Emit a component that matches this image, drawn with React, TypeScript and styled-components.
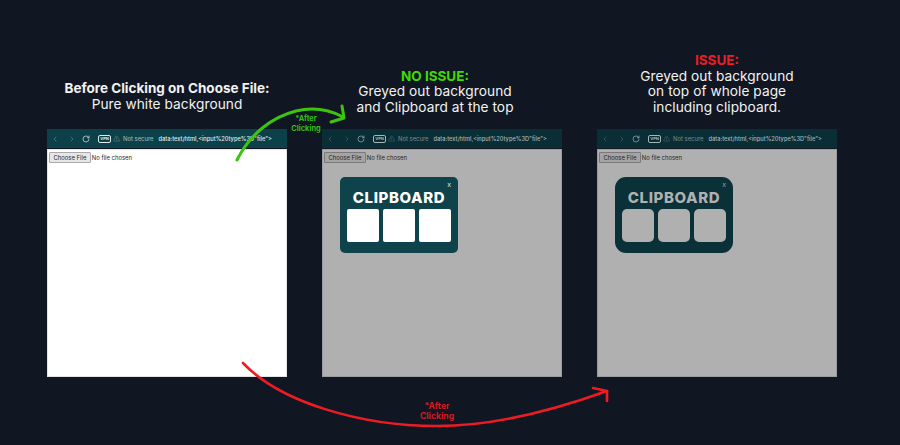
import { ChevronLeft, ChevronRight, RotateCw, TriangleAlert } from "lucide-react";
import styled, { createGlobalStyle } from "styled-components";

const GlobalStyle = createGlobalStyle`
    html, body {
        margin: 0;
        padding: 0;
        background: #111722;
    }
`;

const Page = styled.div`
    position: relative;
    display: flex;
    gap: 35px;
    width: 900px;
    height: 445px;
    padding: 53px 0 0 47px;
    box-sizing: border-box;
    overflow: hidden;
    background: #111722;
    font-family: Inter, "Liberation Sans", sans-serif;
`;

const Column = styled.section`
    display: flex;
    flex-direction: column;
    width: 240px;
`;

const Caption = styled.div<{ $lift?: number; $shift?: number }>`
    display: flex;
    flex-direction: column;
    justify-content: flex-end;
    height: 62px;
    box-sizing: border-box;
    padding-bottom: ${(p) => p.$lift || 0}px;
    padding-right: ${(p) => p.$shift || 0}px;
    margin-bottom: 14px;
    text-align: center;
    color: #f1f2f2;
    font-size: 13.7px;
    line-height: 15.5px;
    letter-spacing: 0.05px;
`;

const CaptionTitle = styled.strong<{ $color?: string }>`
    font-weight: 700;
    font-size: 13.5px;
    letter-spacing: 0;
    color: ${(p) => p.$color || "#f1f2f2"};
`;

const Browser = styled.div`
    display: flex;
    flex-direction: column;
    height: 248px;
`;

const Toolbar = styled.div<{ $dim?: boolean }>`
    display: flex;
    align-items: center;
    height: 19px;
    margin-bottom: 1px;
    padding-left: 4px;
    background: ${(p) => (p.$dim ? "#0a2e36" : "#0c4149")};
    color: ${(p) => (p.$dim ? "#a9b4b6" : "#e3e9ea")};
    font-size: 5.9px;
    white-space: nowrap;
`;

const NavIcon = styled.span<{ $gap: number; $faint?: boolean }>`
    display: flex;
    margin-right: ${(p) => p.$gap}px;
    opacity: ${(p) => (p.$faint ? 0.4 : 1)};
`;

const VpnBadge = styled.span`
    width: 13px;
    height: 8px;
    margin-right: 2px;
    border: 1px solid currentColor;
    border-radius: 2px;
    box-sizing: border-box;
    font-size: 4px;
    font-weight: 700;
    line-height: 6px;
    text-align: center;
`;

const Insecure = styled.span`
    margin: 0 5px 0 3px;
    opacity: 0.7;
`;

const Url = styled.span`
    font-size: 5.7px;
    font-weight: 500;
`;

const Viewport = styled.div<{ $dim?: boolean }>`
    position: relative;
    flex: 1;
    padding: 3px 2px;
    background: ${(p) => (p.$dim ? "#b0b0b0" : "#ffffff")};
    box-shadow: inset 0 0 0 1px ${(p) => (p.$dim ? "#9a9c9e" : "#e4e4e4")};
    color: #262626;
    font-size: 5.9px;
    line-height: 11px;
`;

const FileButton = styled.span<{ $dim?: boolean }>`
    display: inline-block;
    margin-right: 1px;
    padding: 0 3.5px;
    height: 9px;
    border: 1px solid ${(p) => (p.$dim ? "#7a7a7a" : "#a9a9a9")};
    border-radius: 1px;
    background: ${(p) => (p.$dim ? "#a4a4a4" : "#e6e6e6")};
    line-height: 9px;
`;

const Clipboard = styled.div<{ $dim?: boolean }>`
    position: absolute;
    top: 28px;
    left: 18px;
    display: flex;
    flex-direction: column;
    align-items: center;
    width: 118px;
    height: 76px;
    box-sizing: border-box;
    padding-top: 12px;
    border-radius: ${(p) => (p.$dim ? 11 : 5)}px;
    background: ${(p) => (p.$dim ? "#0a3038" : "#0f434c")};
    color: ${(p) => (p.$dim ? "#b0b0b0" : "#ffffff")};
`;

const ClipboardTitle = styled.div`
    font-size: 15px;
    font-weight: 800;
    line-height: 18px;
    letter-spacing: 0.6px;
`;

const CloseMark = styled.span`
    position: absolute;
    top: 3px;
    right: 7px;
    font-size: 7px;
    line-height: 9px;
    opacity: 0.85;
`;

const Slots = styled.div`
    display: flex;
    gap: 4px;
    margin-top: 2px;
`;

const Slot = styled.div<{ $dim?: boolean }>`
    width: 32px;
    height: 33px;
    border-radius: ${(p) => (p.$dim ? 5 : 2)}px;
    background: ${(p) => (p.$dim ? "#b0b0b0" : "#ffffff")};
`;

const Arrows = styled.svg`
    position: absolute;
    top: 0;
    left: 0;
    pointer-events: none;
`;

const Note = styled.div<{ $color: string; $x: number; $y: number; $size: number }>`
    position: absolute;
    left: ${(p) => p.$x}px;
    top: ${(p) => p.$y}px;
    width: 60px;
    margin-left: -30px;
    color: ${(p) => p.$color};
    font-size: ${(p) => p.$size}px;
    font-weight: 700;
    line-height: 9.5px;
    text-align: center;
`;

function BrowserFrame({ dim, children }: { dim?: boolean; children?: React.ReactNode }) {
    return (
        <Browser>
            <Toolbar $dim={dim}>
                <NavIcon $gap={9} $faint><ChevronLeft size={8} /></NavIcon>
                <NavIcon $gap={6} $faint><ChevronRight size={8} /></NavIcon>
                <NavIcon $gap={8}><RotateCw size={8} /></NavIcon>
                <VpnBadge>VPN</VpnBadge>
                <NavIcon $gap={0} $faint><TriangleAlert size={7} /></NavIcon>
                <Insecure>Not secure</Insecure>
                <Url>data:text/html,&lt;input%20type%3D"file"&gt;</Url>
            </Toolbar>
            <Viewport $dim={dim}>
                <FileButton $dim={dim}>Choose File</FileButton>
                No file chosen
                {children}
            </Viewport>
        </Browser>
    );
}

function ClipboardCard({ dim }: { dim?: boolean }) {
    return (
        <Clipboard $dim={dim}>
            <CloseMark>x</CloseMark>
            <ClipboardTitle>CLIPBOARD</ClipboardTitle>
            <Slots>
                <Slot $dim={dim} />
                <Slot $dim={dim} />
                <Slot $dim={dim} />
            </Slots>
        </Clipboard>
    );
}

export default function App() {
    return (
        <Page>
            <GlobalStyle />
            <Column>
                <Caption $lift={3}>
                    <CaptionTitle>Before Clicking on Choose File:</CaptionTitle>
                    <span>Pure white background</span>
                </Caption>
                <BrowserFrame />
            </Column>
            <Column>
                <Caption $shift={14}>
                    <CaptionTitle $color="#3fdc00">NO ISSUE:</CaptionTitle>
                    <span>Greyed out background</span>
                    <span>and Clipboard at the top</span>
                </Caption>
                <BrowserFrame dim>
                    <ClipboardCard />
                </BrowserFrame>
            </Column>
            <Column>
                <Caption>
                    <CaptionTitle $color="#ee1c24">ISSUE:</CaptionTitle>
                    <span>Greyed out background</span>
                    <span>on top of whole page</span>
                    <span>including clipboard.</span>
                </Caption>
                <BrowserFrame dim>
                    <ClipboardCard dim />
                </BrowserFrame>
            </Column>
            <Arrows width="900" height="445" viewBox="0 0 900 445" fill="none" strokeLinecap="round" strokeLinejoin="round">
                <path d="M237 160C250 134 272 117 296 111C313 107 330 110 343 117" stroke="#3cc410" strokeWidth="3" />
                <path d="M342 106L344 118L331 122" stroke="#3cc410" strokeWidth="3" />
                <path d="M243 363C280 402 360 426 437 426C500 426 560 408 607 391" stroke="#ed1c24" strokeWidth="2.6" />
                <path d="M593 388L607 391L607 401" stroke="#ed1c24" strokeWidth="2.6" />
            </Arrows>
            <Note $color="#35bf15" $x={306} $y={114} $size={7.4}>*After<br />Clicking</Note>
            <Note $color="#d8191f" $x={437} $y={402} $size={8.6}>*After<br />Clicking</Note>
        </Page>
    );
}
